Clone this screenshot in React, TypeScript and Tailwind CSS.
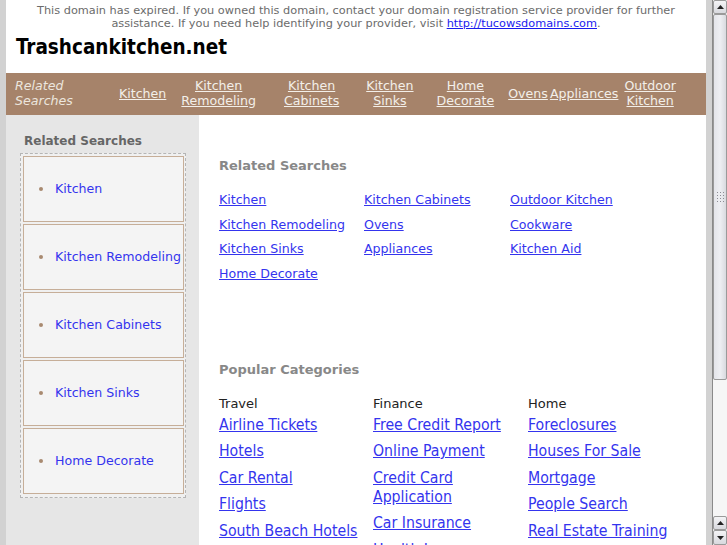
import React from 'react';

const navLinks = [
  { lines: ['Kitchen'], ml: 'ml-0' },
  { lines: ['Kitchen', 'Remodeling'], ml: 'ml-[15px]' },
  { lines: ['Kitchen', 'Cabinets'], ml: 'ml-[28px]' },
  { lines: ['Kitchen', 'Sinks'], ml: 'ml-[27px]' },
  { lines: ['Home', 'Decorate'], ml: 'ml-[23px]' },
  { lines: ['Ovens'], ml: 'ml-[14px]' },
  { lines: ['Appliances'], ml: 'ml-[2px]' },
  { lines: ['Outdoor', 'Kitchen'], ml: 'ml-[6px]' },
];

const sideLinks = ['Kitchen', 'Kitchen Remodeling', 'Kitchen Cabinets', 'Kitchen Sinks', 'Home Decorate'];

const related = [
  'Kitchen', 'Kitchen Cabinets', 'Outdoor Kitchen',
  'Kitchen Remodeling', 'Ovens', 'Cookware',
  'Kitchen Sinks', 'Appliances', 'Kitchen Aid',
  'Home Decorate',
];

const categories = [
  { title: 'Travel', links: ['Airline Tickets', 'Hotels', 'Car Rental', 'Flights', 'South Beach Hotels', 'Las Vegas Hotels'] },
  { title: 'Finance', links: ['Free Credit Report', 'Online Payment', 'Credit Card Application', 'Car Insurance', 'Health Insurance'] },
  { title: 'Home', links: ['Foreclosures', 'Houses For Sale', 'Mortgage', 'People Search', 'Real Estate Training', 'Home Insurance'] },
];

const Arrow = ({ down }: { down?: boolean }) => (
  <svg width="7" height="4" viewBox="0 0 7 4">
    {down ? <path d="M0 0 L7 0 L3.5 4 Z" fill="#222" /> : <path d="M0 4 L7 4 L3.5 0 Z" fill="#222" />}
  </svg>
);

const ScrollButton = ({ down, className }: { down?: boolean; className: string }) => (
  <div className={`flex items-center justify-center rounded-[2px] border border-[#9a9a9a] bg-gradient-to-b from-[#f4f4f6] to-[#d8d9de] ${className}`}>
    <Arrow down={down} />
  </div>
);

const Scrollbar = () => (
  <div className="flex h-[545px] w-[15px] flex-col border-l border-[#8a8a8a] bg-[#efefef]">
    <ScrollButton className="h-[14px]" />
    <div className="flex h-[366px] items-center justify-center rounded-[2px] border border-[#9a9a9a] bg-gradient-to-r from-[#e4e5ea] via-[#eeeff3] to-[#d9dadf]">
      <div className="grid grid-cols-3 gap-[2px]">
        {Array.from({ length: 12 }).map((_, i) => (
          <span key={i} className="h-[1px] w-[1px] bg-[#8c8c94]" />
        ))}
      </div>
    </div>
    <div className="flex-1 bg-[#f6f6f6]" />
    <ScrollButton className="h-[14px]" />
    <ScrollButton down className="h-[15px]" />
  </div>
);

export default function App() {
  return (
    <div className="flex h-[545px] w-[727px] overflow-hidden bg-[#d2d2d2] font-['DejaVu_Sans',sans-serif]">
      <div className="w-[712px] px-[6px]">
        <div className="min-h-full w-[700px] bg-white">
          <p className="px-[6px] pt-[4px] text-center text-[11.3px] leading-[13px] text-[#6b6b6b]">
            This domain has expired. If you owned this domain, contact your domain registration service provider for further
            <br />
            assistance. If you need help identifying your provider, visit{' '}
            <a href="#" className="text-[#1a1aee] underline">http://tucowsdomains.com</a>.
          </p>
          <h1 className="mb-[14px] mt-[5px] pl-[10px] font-['DejaVu_Sans_Condensed','DejaVu_Sans',sans-serif] text-[20.5px] font-bold leading-[24px] text-black">
            Trashcankitchen.net
          </h1>

          <nav className="flex h-[42px] items-center bg-[#a6836a] pb-[2px] text-[12.6px] leading-[15px] text-[#f3efe9]">
            <div className="w-[113px] pl-[9px] italic text-[#ece6de]">
              Related
              <br />
              Searches
            </div>
            {navLinks.map((l, i) => (
              <a key={i} href="#" className={`text-center underline ${l.ml}`}>
                {l.lines.map((t, j) => (
                  <div key={j}>{t}</div>
                ))}
              </a>
            ))}
          </nav>

          <div className="flex">
            <aside className="w-[193px] bg-[#e6e6e6] pb-[14px] pl-[14px] pt-[18px]">
              <h3 className="pl-[4px] text-[12px] font-bold leading-[16px] text-[#666]">Related Searches</h3>
              <div className="mt-[4px] w-[166px] border border-dashed border-[#b5b5b5] bg-white/40 pb-[3px] pl-[2px] pr-[1px] pt-[2px]">
                <ul className="flex flex-col gap-[2px]">
                  {sideLinks.map((s) => (
                    <li key={s} className="flex h-[66px] items-center border border-[#c6ae98] bg-[#f4f4f4] pl-[15px]">
                      <span className="h-[4px] w-[4px] shrink-0 rounded-full bg-[#a88a70]" />
                      <a href="#" className="ml-[12px] whitespace-nowrap text-[12.6px] text-[#3434ee]">{s}</a>
                    </li>
                  ))}
                </ul>
              </div>
            </aside>

            <main className="flex-1 pl-[20px] pt-[43px]">
              <h2 className="text-[13px] font-bold leading-[16px] text-[#888]">Related Searches</h2>
              <div className="mt-[14px] grid grid-cols-[145px_146px_1fr] text-[12.6px] leading-[24.5px]">
                {related.map((r) => (
                  <div key={r}>
                    <a href="#" className="text-[#3434ee] underline">{r}</a>
                  </div>
                ))}
              </div>

              <h2 className="mt-[76px] text-[13px] font-bold leading-[16px] text-[#888]">Popular Categories</h2>
              <div className="mt-[18px] grid grid-cols-[154px_155px_1fr]">
                {categories.map((c) => (
                  <div key={c.title}>
                    <div className="mb-[2.5px] text-[13px] leading-[16px] text-[#222]">{c.title}</div>
                    <ul className="font-['DejaVu_Sans_Condensed','DejaVu_Sans',sans-serif] text-[15.7px] leading-[19px]">
                      {c.links.map((l) => (
                        <li key={l} className="mb-[7.5px] pr-[6px]">
                          <a href="#" className="text-[#3434ee] underline">{l}</a>
                        </li>
                      ))}
                    </ul>
                  </div>
                ))}
              </div>
            </main>
          </div>
        </div>
      </div>
      <Scrollbar />
    </div>
  );
}
